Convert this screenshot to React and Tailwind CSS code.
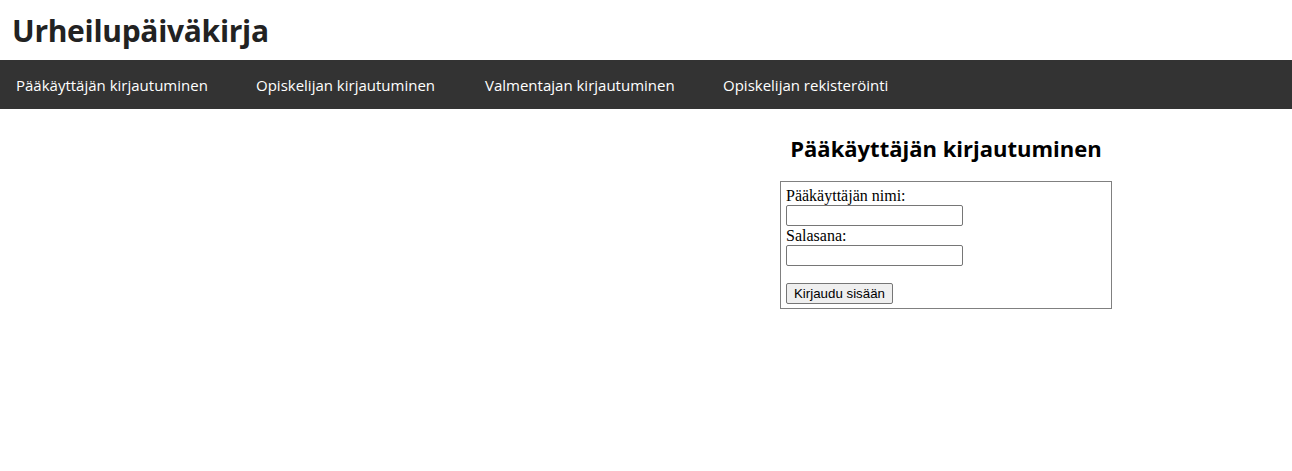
export default function App() {
  const links = [
    { label: "Pääkäyttäjän kirjautuminen", w: "w-[240px]" },
    { label: "Opiskelijan kirjautuminen", w: "w-[229px]" },
    { label: "Valmentajan kirjautuminen", w: "w-[238px]" },
    { label: "Opiskelijan rekisteröinti", w: "w-[200px]" },
  ];

  return (
    <div className="min-h-screen bg-white font-['Open_Sans',sans-serif]">
      <header className="h-[60px] flex items-center pl-3">
        <h1 className="text-[30px] font-bold text-[#222222] tracking-[-0.3px]">
          Urheilupäiväkirja
        </h1>
      </header>

      <nav className="h-[49px] bg-[#333333] flex items-center pl-4 pt-px">
        {links.map((link) => (
          <a
            key={link.label}
            href="#"
            className={`${link.w} text-white text-[15px] whitespace-nowrap`}
          >
            {link.label}
          </a>
        ))}
      </nav>

      <main className="grid grid-cols-[780px_332px] pt-[25px]">
        <div />
        <div>
          <h2 className="text-center text-[22px] font-bold text-black leading-[28px] mb-[19px]">
            Pääkäyttäjän kirjautuminen
          </h2>
          <form className="border border-[#808080] px-[5px] pt-[4px] pb-[4px] font-['Liberation_Serif',serif] text-[16px] leading-[19px] text-black">
            <label htmlFor="name" className="block">
              Pääkäyttäjän nimi:
            </label>
            <input
              id="name"
              type="text"
              className="block w-[177px] h-[21px] border border-[#767676] rounded-[2px] bg-white"
            />
            <label htmlFor="pass" className="block">
              Salasana:
            </label>
            <input
              id="pass"
              type="password"
              className="block w-[177px] h-[21px] border border-[#767676] rounded-[2px] bg-white"
            />
            <div className="h-[17px]" />
            <button
              type="submit"
              className="block h-[21px] px-[7px] bg-[#efefef] border border-[#767676] rounded-[2px] font-['Liberation_Sans',sans-serif] text-[13.3px] leading-none text-black"
            >
              Kirjaudu sisään
            </button>
          </form>
        </div>
      </main>
    </div>
  );
}
